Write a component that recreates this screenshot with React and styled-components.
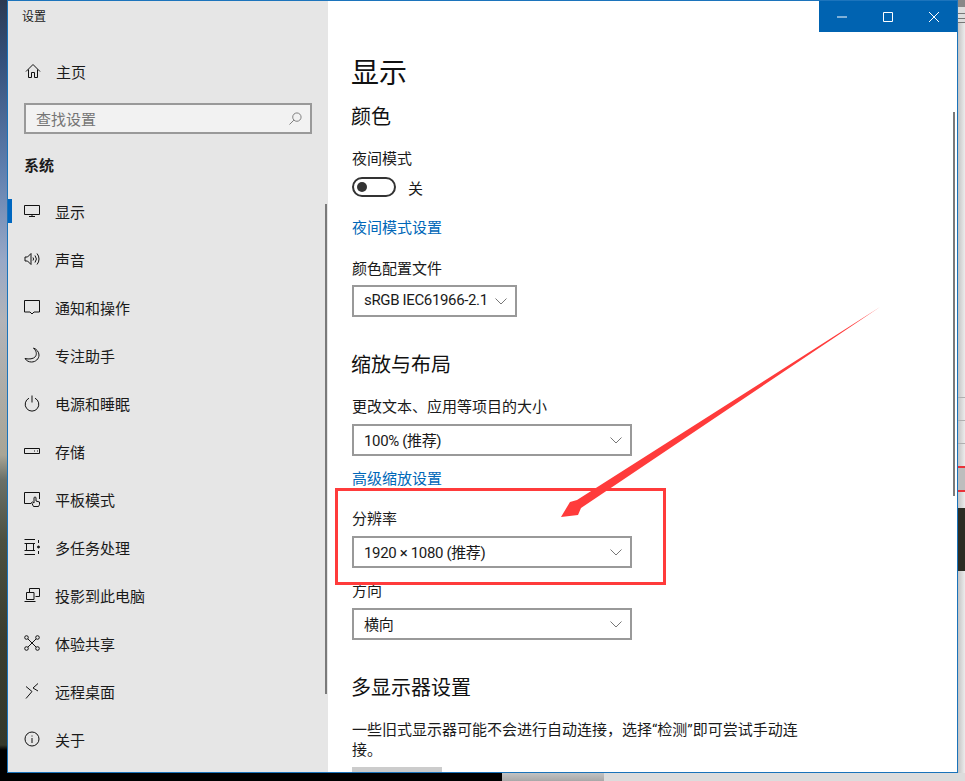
import React from 'react'
import styled, { createGlobalStyle } from 'styled-components'

const FONT = `Roboto, "Noto Sans CJK SC", sans-serif`

const navItems = [
  { label: '显示', icon: 'display', active: true },
  { label: '声音', icon: 'sound' },
  { label: '通知和操作', icon: 'message' },
  { label: '专注助手', icon: 'moon' },
  { label: '电源和睡眠', icon: 'power' },
  { label: '存储', icon: 'storage' },
  { label: '平板模式', icon: 'tablet' },
  { label: '多任务处理', icon: 'tasks' },
  { label: '投影到此电脑', icon: 'project' },
  { label: '体验共享', icon: 'share' },
  { label: '远程桌面', icon: 'remote' },
  { label: '关于', icon: 'info' },
]

const iconPaths = {
  home: <path d="M1 8.5 8 1.5l7 7M3.5 6.5V14.5H6.5V9.5H9.5V14.5H12.5V6.5" />,
  display: <path d="M.5 2.5H15.5V11.5H.5ZM8 11.5V13.5M5 13.5H11" />,
  sound: (
    <>
      <path d="M1 6H3.5L7 2.5V13.5L3.5 10H1Z" />
      <path d="M9 6.5a2.5 2.5 0 0 1 0 3M11 4.5a5.5 5.5 0 0 1 0 7M13 2.5a8.5 8.5 0 0 1 0 11" />
    </>
  ),
  message: <path d="M.5 1.5H15.5V13H10L8 15 6 13H.5Z" />,
  moon: <path d="M9.5 1C12.5 4 13 7 11.5 9.5 9.5 12 5 12.5 1 11.5 2.5 14 5 15 7.5 15 11.5 15 15 12 15 8 15 5 12.5 2 9.5 1Z" />,
  power: (
    <>
      <path d="M5 3.2a6.8 6.8 0 1 0 6 0" />
      <path d="M8 .5V7.5" />
    </>
  ),
  storage: (
    <>
      <path d="M.5 5.5H15.5V10.5H.5Z" />
      <path d="M10 8H11M13 8H14" />
    </>
  ),
  tablet: (
    <>
      <path d="M7 12.5H.5V1.5H15.5V8" />
      <path d="M9.5 15.5 7.5 11.5 8.5 11 10 12V7a1 1 0 0 1 2 0V10L15.5 11V13.5L14.5 15.5Z" />
    </>
  ),
  tasks: (
    <>
      <path d="M.5.5H11M.5 15.5H11M2.5 4.5H9.5V11.5H2.5ZM.5 4.5H11M.5 11.5H11" />
      <path d="M14.5 1V4M14.5 12V15" />
      <circle cx="14.5" cy="8" r="1" fill="currentColor" />
    </>
  ),
  project: (
    <>
      <path d="M5.5 5V1.5H15.5V9.5H11.5" />
      <path d="M2.5 5.5H10V12.5H2.5ZM.5 14.5H11.5" />
    </>
  ),
  share: (
    <>
      <circle cx="2.5" cy="2.5" r="1.8" />
      <circle cx="13.5" cy="2.5" r="1.8" />
      <circle cx="2.5" cy="13.5" r="1.8" />
      <circle cx="13.5" cy="13.5" r="1.8" />
      <path d="M4 4 12 12M12 4 4 12" />
    </>
  ),
  remote: <path d="M2 3.5 8 8.5 2 15.5M14 .5 9 5 14 8" />,
  info: (
    <>
      <circle cx="8" cy="8" r="7" />
      <path d="M8 7V12M8 4.5V5.5" />
    </>
  ),
}

const Icon = ({ name }) => (
  <NavGlyph viewBox="0 0 16 16">{iconPaths[name]}</NavGlyph>
)

const Chevron = () => (
  <ChevronGlyph viewBox="0 0 12 7">
    <path d="M.5.5 6 6 11.5.5" />
  </ChevronGlyph>
)

const Dropdown = ({ value, width, top }) => (
  <Select $width={width} $top={top}>
    <span>{value}</span>
    <Chevron />
  </Select>
)

export default function App() {
  return (
    <>
      <GlobalStyle />
      <Desktop>
        <LeftWallpaper />
        <Window>
          <Sidebar>
            <AppTitle>设置</AppTitle>
            <HomeRow>
              <Icon name="home" />
              <span>主页</span>
            </HomeRow>
            <SearchBox>
              <span>查找设置</span>
              <SearchGlyph viewBox="0 0 14 14">
                <circle cx="8.5" cy="5.5" r="4.5" />
                <path d="M5.3 8.7.5 13.5" />
              </SearchGlyph>
            </SearchBox>
            <GroupTitle>系统</GroupTitle>
            <nav>
              {navItems.map((item) => (
                <NavRow key={item.label} $active={item.active}>
                  <Icon name={item.icon} />
                  <span>{item.label}</span>
                </NavRow>
              ))}
            </nav>
            <SidebarThumb />
          </Sidebar>
          <Main>
            <WindowControls>
              <ControlButton>
                <svg viewBox="0 0 10 10"><path d="M0 5H10" /></svg>
              </ControlButton>
              <ControlButton>
                <svg viewBox="0 0 10 10"><path d="M.5.5H9.5V9.5H.5Z" /></svg>
              </ControlButton>
              <ControlButton>
                <svg viewBox="0 0 10 10"><path d="M0 0 10 10M10 0 0 10" /></svg>
              </ControlButton>
            </WindowControls>
            <PageTitle>显示</PageTitle>
            <SectionTitle $top={9}>颜色</SectionTitle>
            <FieldLabel $top={18}>夜间模式</FieldLabel>
            <ToggleRow>
              <Toggle />
              <span>关</span>
            </ToggleRow>
            <TextLink $top={21}>夜间模式设置</TextLink>
            <FieldLabel $top={21}>颜色配置文件</FieldLabel>
            <Dropdown value="sRGB IEC61966-2.1" width={165} top={6} />
            <SectionTitle $top={34}>缩放与布局</SectionTitle>
            <FieldLabel $top={18}>更改文本、应用等项目的大小</FieldLabel>
            <Dropdown value="100% (推荐)" width={280} top={7} />
            <TextLink $top={13}>高级缩放设置</TextLink>
            <FieldLabel $top={20}>分辨率</FieldLabel>
            <Dropdown value="1920 × 1080 (推荐)" width={280} top={7} />
            <FieldLabel $top={13}>方向</FieldLabel>
            <Dropdown value="横向" width={280} top={7} />
            <SectionTitle $top={34}>多显示器设置</SectionTitle>
            <Paragraph>
              一些旧式显示器可能不会进行自动连接，选择“检测”即可尝试手动连接。
            </Paragraph>
            <DetectButton />
            <MainThumb />
          </Main>
        </Window>
        <RightWallpaper>
          <StripLines $height={65} />
          <StripPlain $height={332} />
          <StripRule />
          <StripPlain $height={22} />
          <StripRule />
          <StripPlain $height={22} />
          <StripRule />
          <StripPlain $height={22} />
          <StripRed />
          <StripBlock />
          <StripRed />
          <StripPlain $height={16} />
          <StripPhoto />
          <StripPlain $height={198} />
        </RightWallpaper>
        <BottomBlack />
        <BottomTab />
        <BottomRest />
        <Annotation>
          <ArrowCanvas viewBox="0 0 965 781">
            <polygon points="880,307 577,500 570,502 561,517 578,515 581,508" fill="#ff3b3b" />
          </ArrowCanvas>
          <HighlightBox />
        </Annotation>
      </Desktop>
    </>
  )
}

//STYLED COMPONENTS
const GlobalStyle = createGlobalStyle`
  html, body {
    margin: 0;
    padding: 0;
    background: #000;
  }
  body {
    font-family: ${FONT};
    font-size: 15px;
    color: #1a1a1a;
  }
`

const Desktop = styled.div`
  position: relative;
  width: 965px;
  height: 781px;
  overflow: hidden;
  display: grid;
  grid-template-columns: 7px 495px 102px 354px 7px;
  grid-template-rows: 773px 8px;
  grid-template-areas:
    "left win win win right"
    "black black tab rest rest";
`

const LeftWallpaper = styled.div`
  grid-area: left;
  background: linear-gradient(
    180deg,
    #2b3a52 0,
    #34507a 60px,
    #5f7fae 170px,
    #98a8c6 260px,
    #b3b4b8 320px,
    #a9a596 455px,
    #6a7068 480px,
    #4c5040 540px,
    #3a3d2e 640px,
    #34382a 745px,
    #000 750px
  );
`

const Window = styled.div`
  grid-area: win;
  display: flex;
  box-sizing: border-box;
  border: 1px solid #1a73ba;
  border-top-color: #1c74bc;
`

const Sidebar = styled.aside`
  position: relative;
  width: 320px;
  flex-shrink: 0;
  background: #e6e6e6;
  box-sizing: border-box;
`

const AppTitle = styled.div`
  height: 30px;
  padding-left: 14px;
  font-size: 12px;
  line-height: 32px;
`

const NavGlyph = styled.svg`
  width: 16px;
  height: 16px;
  flex-shrink: 0;
  overflow: visible;
  fill: none;
  stroke: currentColor;
  stroke-width: 1;
  color: #111;
`

const HomeRow = styled.div`
  height: 24px;
  margin-top: 28px;
  padding-left: 17px;
  display: flex;
  align-items: center;
  gap: 15px;
  color: #1a1a1a;
`

const SearchBox = styled.div`
  box-sizing: border-box;
  width: 288px;
  height: 31px;
  margin: 20px 0 0 16px;
  padding: 0 8px 0 10px;
  border: 2px solid #999;
  background: #f2f2f2;
  color: #757575;
  display: flex;
  align-items: center;
  justify-content: space-between;
`

const SearchGlyph = styled.svg`
  width: 13px;
  height: 13px;
  fill: none;
  stroke: #777;
  stroke-width: 1;
`

const GroupTitle = styled.div`
  margin: 21px 0 0 16px;
  height: 22px;
  line-height: 22px;
  font-size: 15px;
  font-weight: 700;
  color: #1a1a1a;
`

const NavRow = styled.div`
  position: relative;
  height: 48px;
  padding-left: 16px;
  display: flex;
  align-items: center;
  gap: 15px;
  margin-top: 0;
  &:first-child {
    margin-top: 10px;
  }
  &::before {
    content: '';
    display: ${(p) => (p.$active ? 'block' : 'none')};
    position: absolute;
    left: 0;
    top: 12px;
    width: 4px;
    height: 24px;
    background: #0067c0;
  }
`

const SidebarThumb = styled.div`
  position: absolute;
  right: 1px;
  top: 203px;
  width: 2px;
  height: 490px;
  background: #7a7a7a;
`

const Main = styled.main`
  position: relative;
  flex: 1;
  min-width: 0;
  background: #fff;
  overflow: hidden;
  padding: 53px 0 0 23px;
  box-sizing: border-box;
`

const WindowControls = styled.div`
  position: absolute;
  top: 0;
  right: 0;
  display: flex;
  background: #0063b1;
`

const ControlButton = styled.div`
  width: 46px;
  height: 31px;
  display: flex;
  align-items: center;
  justify-content: center;
  svg {
    width: 10px;
    height: 10px;
    fill: none;
    stroke: #fff;
    stroke-width: 1;
    overflow: visible;
  }
`

const PageTitle = styled.h1`
  margin: 0;
  font-size: 28px;
  font-weight: 400;
  line-height: 40px;
  color: #111;
`

const SectionTitle = styled.h2`
  margin: ${(p) => p.$top}px 0 0;
  font-size: 20px;
  font-weight: 400;
  line-height: 28px;
  color: #111;
`

const FieldLabel = styled.div`
  margin-top: ${(p) => p.$top}px;
  margin-left: 1px;
  font-size: 15px;
  line-height: 20px;
  color: #1a1a1a;
`

const ToggleRow = styled.div`
  margin: 8px 0 0 1px;
  height: 20px;
  display: flex;
  align-items: center;
  gap: 12px;
  font-size: 15px;
`

const Toggle = styled.div`
  position: relative;
  box-sizing: border-box;
  width: 44px;
  height: 20px;
  border: 2px solid #333;
  border-radius: 10px;
  &::after {
    content: '';
    position: absolute;
    left: 3px;
    top: 3px;
    width: 10px;
    height: 10px;
    border-radius: 50%;
    background: #333;
  }
`

const TextLink = styled.a`
  display: block;
  margin-top: ${(p) => p.$top}px;
  margin-left: 1px;
  font-size: 15px;
  line-height: 20px;
  color: #0067b8;
`

const Select = styled.div`
  box-sizing: border-box;
  width: ${(p) => p.$width}px;
  height: 32px;
  margin: ${(p) => p.$top}px 0 0 1px;
  padding: 0 8px 2px 10px;
  border: 2px solid #999;
  display: flex;
  align-items: center;
  justify-content: space-between;
  font-size: 15px;
  letter-spacing: -0.35px;
  color: #1a1a1a;
  white-space: nowrap;
`

const ChevronGlyph = styled.svg`
  width: 12px;
  height: 7px;
  flex-shrink: 0;
  margin-top: 2px;
  fill: none;
  stroke: #777;
  stroke-width: 1;
  overflow: visible;
`

const Paragraph = styled.p`
  width: 456px;
  margin: 18px 0 0 1px;
  font-size: 15px;
  line-height: 20px;
  color: #1a1a1a;
`

const DetectButton = styled.div`
  width: 90px;
  height: 30px;
  margin: 7px 0 0 1px;
  background: #ccc;
`

const MainThumb = styled.div`
  position: absolute;
  right: 2px;
  top: 111px;
  width: 2px;
  height: 384px;
  background: #7a7a7a;
`

const RightWallpaper = styled.div`
  grid-area: right;
  display: flex;
  flex-direction: column;
  background: linear-gradient(90deg, #c4c4c4, #ececec);
`

const StripPlain = styled.div`
  height: ${(p) => p.$height}px;
  flex-shrink: 0;
`

const StripLines = styled.div`
  height: ${(p) => p.$height}px;
  flex-shrink: 0;
  background: linear-gradient(
    180deg,
    #888 0 7px,
    #ddd 7px 13px,
    #777 13px 14px,
    #ddd 14px 18px,
    #777 18px 19px,
    #ddd 19px 22px,
    #777 22px 23px,
    transparent 23px
  );
`

const StripRule = styled.div`
  height: 1px;
  background: #b0b0b0;
`

const StripRed = styled.div`
  height: 2px;
  background: #e8333a;
`

const StripBlock = styled.div`
  height: 22px;
  background: #bdbdbd;
`

const StripPhoto = styled.div`
  height: 63px;
  flex-shrink: 0;
  background: #2c2c24;
`

const BottomBlack = styled.div`
  grid-area: black;
  background: #000;
`

const BottomTab = styled.div`
  grid-area: tab;
  background: linear-gradient(180deg, #c2c2c2, #a8a8a8);
`

const BottomRest = styled.div`
  grid-area: rest;
  background: #dcdcdc;
`

const Annotation = styled.div`
  position: absolute;
  inset: 0;
  pointer-events: none;
`

const ArrowCanvas = styled.svg`
  position: absolute;
  inset: 0;
  width: 965px;
  height: 781px;
`

const HighlightBox = styled.div`
  position: absolute;
  left: 335px;
  top: 488px;
  width: 331px;
  height: 97px;
  box-sizing: border-box;
  border: 3px solid #ff3b3b;
`
